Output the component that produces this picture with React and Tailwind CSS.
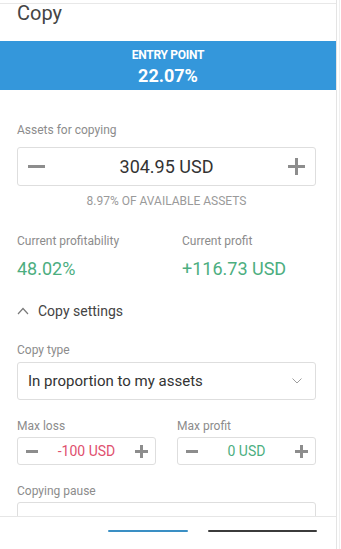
import React from "react";

const font = { fontFamily: "Roboto, 'Liberation Sans', sans-serif" };

function Minus({ size = 17, thick = 3 }) {
  return <span className="block bg-[#8d8d8d]" style={{ width: size, height: thick }} />;
}

function Plus({ size = 17, thick = 3 }) {
  return (
    <span className="relative block" style={{ width: size, height: size }}>
      <span className="absolute left-0 bg-[#8d8d8d]" style={{ width: size, height: thick, top: (size - thick) / 2 }} />
      <span className="absolute top-0 bg-[#8d8d8d]" style={{ height: size, width: thick, left: (size - thick) / 2 }} />
    </span>
  );
}

function SmallStepper({ value, color }) {
  return (
    <div className="flex h-[28px] items-center justify-between rounded-[3px] border border-[#dedede] pl-[8px] pr-[7px]">
      <Minus size={12} thick={3} />
      <span className={`text-[14px] leading-[16px] ${color}`}>{value}</span>
      <Plus size={13} thick={3} />
    </div>
  );
}

export default function App() {
  return (
    <div className="flex h-[549px] w-[341px] overflow-hidden bg-white" style={font}>
      <div className="flex h-full w-[337px] flex-col border-r border-[#e4e4e4] pt-[3px]">
        <div className="h-[38px] border-t border-[#e8e8e8]">
          <p className="pl-[17px] text-[20px] leading-[18px] text-[#454545]">Copy</p>
        </div>

        <div className="flex h-[49px] flex-col items-center bg-[#3497db] pt-[7px] text-white">
          <p className="text-[12px] font-bold leading-[14px] tracking-tight">ENTRY POINT</p>
          <p className="mt-[4px] text-[18px] font-bold leading-[20px]">22.07%</p>
        </div>

        <div className="min-h-0 flex-1 overflow-hidden pl-[17px] pr-[20px] pt-[33px]">
          <p className="text-[12px] leading-[14px] text-[#8c8c8c]">Assets for copying</p>
          <div className="mt-[10px] flex h-[39px] items-center justify-between rounded-[3px] border border-[#dedede] pl-[10px] pr-[10px]">
            <Minus />
            <span className="text-[18px] leading-[20px] text-[#333]">304.95 USD</span>
            <Plus />
          </div>
          <p className="mt-[8px] text-center text-[12px] leading-[14px] text-[#9a9a9a]">8.97% OF AVAILABLE ASSETS</p>

          <div className="mt-[26px] grid grid-cols-[165px_1fr]">
            <div>
              <p className="text-[12px] leading-[14px] text-[#8c8c8c]">Current profitability</p>
              <p className="mt-[11px] text-[18px] leading-[20px] text-[#4cae7f]">48.02%</p>
            </div>
            <div>
              <p className="text-[12px] leading-[14px] text-[#8c8c8c]">Current profit</p>
              <p className="mt-[11px] text-[18px] leading-[20px] text-[#4cae7f]">+116.73 USD</p>
            </div>
          </div>

          <div className="mt-[24px] flex items-center">
            <svg width="12" height="8" viewBox="0 0 12 8" className="mr-[9px]">
              <path d="M1 7 L6 1.5 L11 7" fill="none" stroke="#7a7a7a" strokeWidth="1.2" />
            </svg>
            <span className="text-[14px] leading-[16px] text-[#444]">Copy settings</span>
          </div>

          <p className="mt-[24px] text-[12px] leading-[14px] text-[#8c8c8c]">Copy type</p>
          <div className="mt-[5px] flex h-[38px] items-center justify-between rounded-[3px] border border-[#dedede] pl-[10px] pr-[13px]">
            <span className="text-[15px] leading-[18px] text-[#333]">In proportion to my assets</span>
            <svg width="10" height="6" viewBox="0 0 10 6">
              <path d="M0.5 0.5 L5 5 L9.5 0.5" fill="none" stroke="#9e9e9e" strokeWidth="1" />
            </svg>
          </div>

          <div className="mt-[19px] grid grid-cols-2 gap-[21px]">
            <div>
              <p className="text-[12px] leading-[14px] text-[#8c8c8c]">Max loss</p>
              <div className="mt-[4px]">
                <SmallStepper value="-100 USD" color="text-[#e0506e]" />
              </div>
            </div>
            <div>
              <p className="text-[12px] leading-[14px] text-[#8c8c8c]">Max profit</p>
              <div className="mt-[4px]">
                <SmallStepper value="0 USD" color="text-[#4cae7f]" />
              </div>
            </div>
          </div>

          <p className="mt-[19px] text-[12px] leading-[14px] text-[#8c8c8c]">Copying pause</p>
          <div className="mt-[4px] h-[40px] rounded-[3px] border border-[#dedede]" />
        </div>

        <div className="h-[33px] border-t border-[#e6e6e6] bg-white pl-[108px] pt-[13px]">
          <div className="flex gap-[20px]">
            <span className="block h-[2px] w-[80px] rounded-full bg-[#3a8fc4]" />
            <span className="block h-[2px] w-[109px] rounded-full bg-[#3b3b3b]" />
          </div>
        </div>
      </div>
      <div className="ml-[2px] h-full w-[1px] bg-[#efefef]" />
    </div>
  );
}
